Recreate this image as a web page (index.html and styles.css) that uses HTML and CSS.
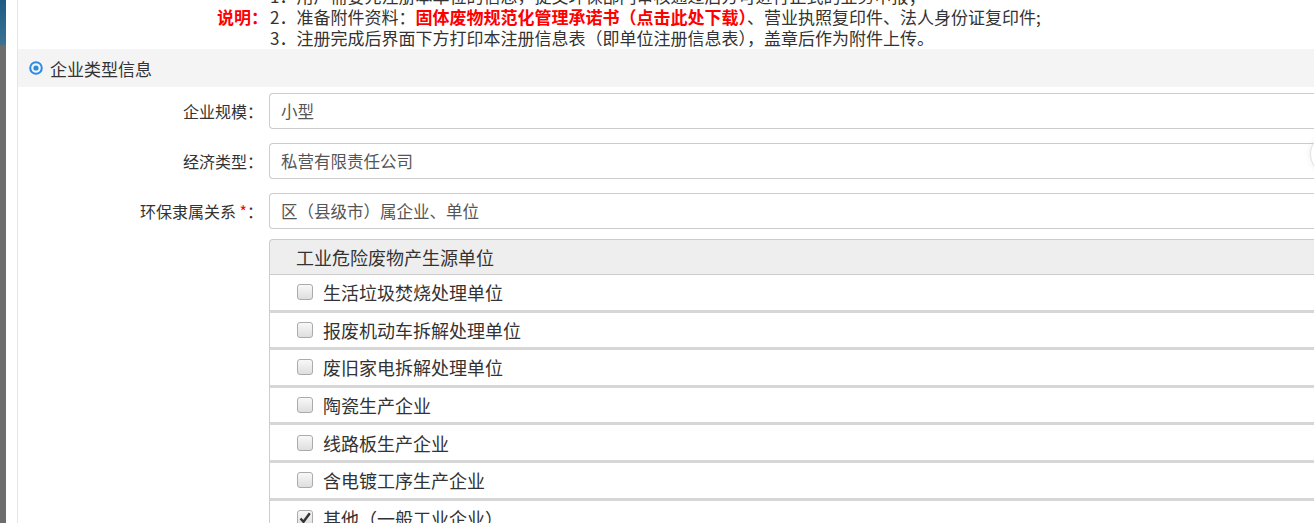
FILE: index.html
```html
<!DOCTYPE html>
<html lang="zh-CN">
<head>
  <meta charset="UTF-8" />
  <meta name="viewport" content="width=device-width, initial-scale=1" />
  <title>单位注册 - 企业类型信息</title>
  <link rel="stylesheet" href="styles.css">
</head>
<body>
  <div class="page">
    <div class="app-edge"></div>

    <div class="panel">
      <div class="notes">
        <span class="notes-label"></span>
        <p>1．用户需要先注册本单位的信息，提交环保部门审核通过后方可进行正式的业务申报；</p>
        <span class="notes-label">说明：</span>
        <p>2．准备附件资料：<a href="#">固体废物规范化管理承诺书（点击此处下载）</a>、营业执照复印件、法人身份证复印件;</p>
        <span class="notes-label"></span>
        <p>3．注册完成后界面下方打印本注册信息表（即单位注册信息表），盖章后作为附件上传。</p>
      </div>

      <div class="section-title">
        <svg class="section-icon" width="14" height="14" viewBox="0 0 14 14">
          <circle cx="7" cy="7" r="5.8" fill="none" stroke="#2a8be0" stroke-width="2" />
          <circle cx="7" cy="7" r="2.6" fill="#2a8be0" />
        </svg>
        <span>企业类型信息</span>
      </div>

      <div class="form">
        <div class="form-row">
          <label class="form-label">企业规模：</label>
          <div class="form-control">小型</div>
        </div>
        <div class="form-row">
          <label class="form-label">经济类型：</label>
          <div class="form-control">私营有限责任公司</div>
        </div>
        <div class="form-row">
          <label class="form-label">环保隶属关系 <span class="required">*</span>：</label>
          <div class="form-control">区（县级市）属企业、单位</div>
        </div>
        <div class="form-row list-row">
          <span class="form-label"></span>
          <div class="type-list">
            <div class="type-list-head">工业危险废物产生源单位</div>
            <div class="type-item"><span class="check"></span>生活垃圾焚烧处理单位</div>
            <div class="type-item"><span class="check"></span>报废机动车拆解处理单位</div>
            <div class="type-item"><span class="check"></span>废旧家电拆解处理单位</div>
            <div class="type-item"><span class="check"></span>陶瓷生产企业</div>
            <div class="type-item"><span class="check"></span>线路板生产企业</div>
            <div class="type-item"><span class="check"></span>含电镀工序生产企业</div>
            <div class="type-item">
              <span class="check on">
                <svg width="14" height="14" viewBox="0 0 14 14">
                  <path d="M2.5 7.5 L5.5 10.8 L11.8 2.2" fill="none" stroke="#333" stroke-width="2.4" />
                </svg>
              </span>其他（一般工业企业）
            </div>
          </div>
        </div>
      </div>
    </div>
  </div>

  <div class="float-btn"></div>
</body>
</html>
```

FILE: styles.css
```css
body {
  margin: 0;
  font-family: "Noto Sans CJK SC", "Noto Sans", sans-serif;
  color: #333;
  background: #fff;
  height: 523px;
  overflow: hidden;
}
.page {
  display: flex;
  min-height: 523px;
}
.app-edge {
  width: 6px;
  flex: none;
  background: linear-gradient(#1f5a82 0, #3a7294 44px, #6d6d6d 46px, #6d6d6d 100%);
}
.panel {
  flex: 1;
  margin-left: 11px;
  border-left: 1px solid #e6e6e6;
}

/* notes at the top */
.notes {
  display: grid;
  grid-template-columns: 250px 1fr;
  column-gap: 2px;
  margin-top: -15px;
  margin-bottom: 1px;
  font-size: 17px;
  line-height: 21px;
}
.notes p {
  margin: 0;
  white-space: nowrap;
}
.notes-label {
  text-align: right;
  color: #f00;
  font-weight: bold;
}
.notes a {
  color: #f00;
  font-weight: bold;
  text-decoration: none;
}

/* section header */
.section-title {
  height: 38px;
  background: #f4f4f4;
  display: flex;
  align-items: center;
  gap: 7px;
  padding-left: 11px;
  font-size: 17px;
}
.section-icon {
  flex: none;
}

/* form */
.form {
  display: flex;
  flex-direction: column;
  gap: 14px;
  padding-top: 6px;
}
.form-row {
  display: grid;
  grid-template-columns: 245px 1fr;
  column-gap: 6px;
  align-items: center;
}
.form-label {
  text-align: right;
  font-size: 16px;
}
.required {
  color: #f00;
}
.form-control {
  height: 36px;
  box-sizing: border-box;
  display: flex;
  align-items: center;
  padding-left: 11px;
  border: 1px solid #ccc;
  border-right: none;
  border-radius: 4px 0 0 4px;
  font-size: 16.5px;
  color: #555;
}

/* type list */
.list-row {
  align-items: start;
  margin-top: -4px;
}
.type-list-head {
  height: 36px;
  box-sizing: border-box;
  display: flex;
  align-items: center;
  padding-left: 26px;
  background: #eee;
  border: 1px solid #ccc;
  border-right: none;
  border-top-left-radius: 4px;
  font-size: 18px;
}
.type-item {
  height: 37.6px;
  box-sizing: border-box;
  display: flex;
  align-items: center;
  gap: 10px;
  padding-left: 27px;
  border-left: 1px solid #ccc;
  border-bottom: 3px solid #d6d6d6;
  font-size: 18px;
}
.check {
  width: 16px;
  height: 16px;
  box-sizing: border-box;
  flex: none;
  display: flex;
  align-items: center;
  justify-content: center;
  border: 1px solid #ababab;
  border-radius: 3px;
  background: linear-gradient(#f8f8f8, #dedede);
}

.float-btn {
  position: absolute;
  left: 1310px;
  top: 133px;
  width: 40px;
  height: 40px;
  border-radius: 50%;
  border: 1px solid #e2e2e2;
  background: #fff;
  box-shadow: 0 0 6px rgba(0, 0, 0, 0.08);
}
```
